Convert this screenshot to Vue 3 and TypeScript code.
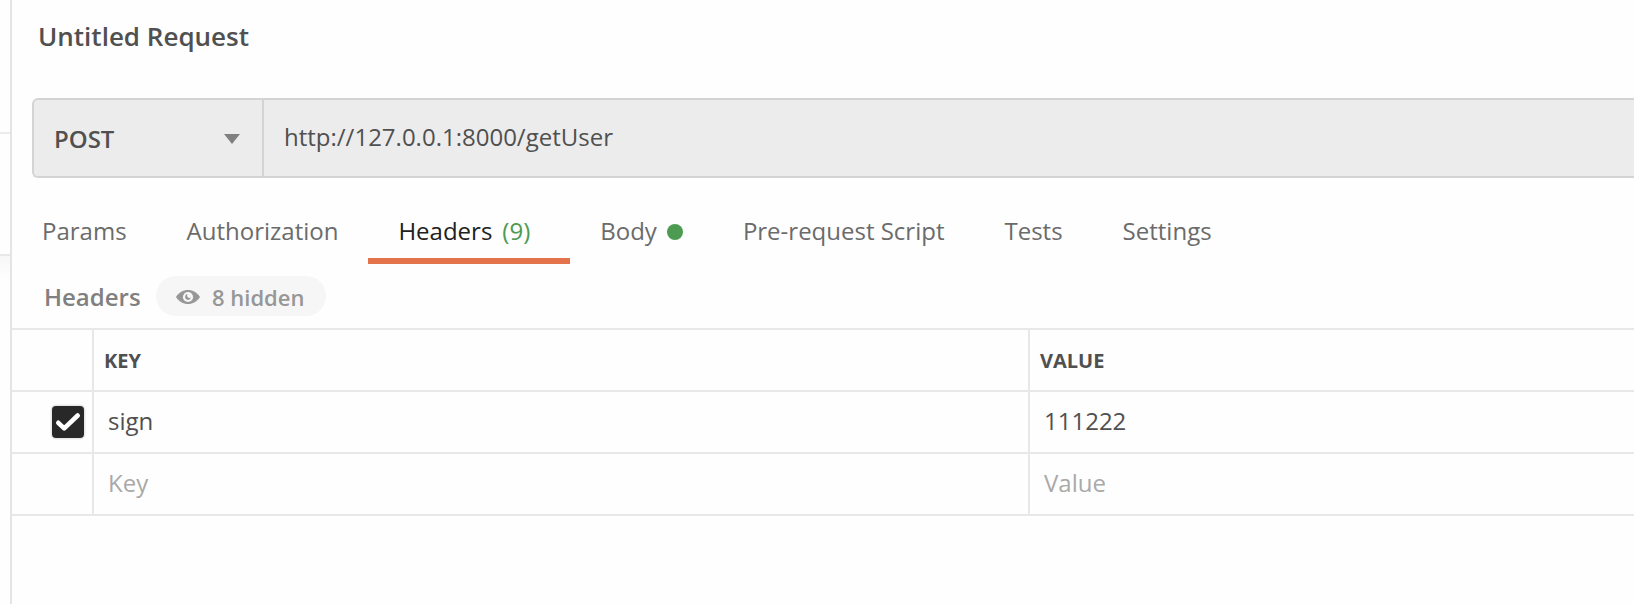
<template>
  <div class="workspace">
    <aside class="sidebar">
      <div class="sidebar-top"></div>
      <div class="sidebar-item"></div>
      <div class="sidebar-rest"></div>
    </aside>

    <main class="request">
      <h1 class="request-name">Untitled Request</h1>

      <div class="url-bar">
        <button class="method" type="button">
          <span>{{ method }}</span>
          <svg class="caret" width="16" height="10" viewBox="0 0 16 10">
            <path d="M0 0h16L8 10z" fill="#808080" />
          </svg>
        </button>
        <div class="url">{{ url }}</div>
      </div>

      <nav class="tabs">
        <div
          v-for="tab in tabs"
          :key="tab.label"
          :class="['tab', { active: tab.label === activeTab }]"
          @click="activeTab = tab.label"
        >
          <span>{{ tab.label }}</span>
          <span v-if="tab.count" class="tab-count">({{ tab.count }})</span>
          <span v-if="tab.dot" class="tab-dot"></span>
        </div>
      </nav>

      <div class="section-bar">
        <span class="section-title">Headers</span>
        <button class="hidden-toggle" type="button">
          <svg width="24" height="14" viewBox="0 0 24 14">
            <path
              fill="#979797"
              fill-rule="evenodd"
              d="M0 7C3 2.300 7.200 0 12 0s9 2.300 12 7c-3 4.700-7.200 7-12 7S3 11.700 0 7zM12 1.900a5.100 5.100 0 1 0 0 10.200 5.100 5.100 0 0 0 0-10.200z"
            />
            <path fill="#979797" d="M11.700 4.100a2.900 2.900 0 1 0 3.200 3.200 1.800 1.800 0 0 1-3.200-3.200z" />
          </svg>
          <span>8 hidden</span>
        </button>
      </div>

      <div class="table">
        <div class="row head">
          <div class="cell check"></div>
          <div class="cell">KEY</div>
          <div class="cell">VALUE</div>
        </div>
        <div v-for="(row, i) in rows" :key="i" class="row">
          <div class="cell check">
            <span v-if="row.enabled" class="checkbox">
              <svg width="32" height="32" viewBox="0 0 32 32">
                <path
                  d="M6.300 16.800l5.900 5.600L25.700 9.500"
                  fill="none"
                  stroke="#fff"
                  stroke-width="4.600"
                  stroke-linecap="round"
                  stroke-linejoin="round"
                />
              </svg>
            </span>
          </div>
          <div :class="['cell', { placeholder: !row.key }]">{{ row.key || 'Key' }}</div>
          <div :class="['cell', { placeholder: !row.value }]">{{ row.value || 'Value' }}</div>
        </div>
      </div>
    </main>
  </div>
</template>

<script setup lang="ts">
import { ref } from 'vue'

interface Tab {
  label: string
  // Number shown in brackets after the label
  count?: number
  // Green marker for tabs that hold data
  dot?: boolean
}

interface HeaderRow {
  key: string
  value: string
  enabled: boolean
}

const method = ref('POST')
const url = ref('http://127.0.0.1:8000/getUser')
const activeTab = ref('Headers')

const tabs: Tab[] = [
  { label: 'Params' },
  { label: 'Authorization' },
  { label: 'Headers', count: 9 },
  { label: 'Body', dot: true },
  { label: 'Pre-request Script' },
  { label: 'Tests' },
  { label: 'Settings' },
]

// The last row is the empty one for new entries
const rows = ref<HeaderRow[]>([
  { key: 'sign', value: '111222', enabled: true },
  { key: '', value: '', enabled: false },
])
</script>

<style>
body {
  margin: 0;
  background: #fff;
}
</style>

<style scoped>
.workspace {
  display: flex;
  height: 604px;
  overflow: hidden;
  background: #fefefe;
  color: #505050;
  font-family: 'Open Sans', sans-serif;
  font-size: 24px;
  line-height: 33px;
}

.workspace * {
  box-sizing: border-box;
}

button {
  padding: 0;
  border: none;
  color: inherit;
  font: inherit;
}

.sidebar {
  display: flex;
  flex-direction: column;
  flex: none;
  width: 12px;
  border-right: 2px solid #e4e4e4;
}

.sidebar-top {
  height: 134px;
  border-bottom: 2px solid #ececec;
}

.sidebar-item {
  height: 122px;
  border-bottom: 2px solid #e8e8e8;
}

.sidebar-rest {
  height: 24px;
  background: linear-gradient(#f7f7f7, #fefefe);
}

.request {
  flex: 1;
  min-width: 0;
}

.request-name {
  margin: 0;
  padding: 18px 0 0 26px;
  height: 98px;
  font-size: 26px;
  font-weight: 600;
  line-height: 36px;
}

.url-bar {
  display: flex;
  height: 80px;
  margin-left: 20px;
  border: 2px solid #d4d4d4;
  border-right: none;
  border-radius: 6px 0 0 6px;
  background: #ececec;
}

.method {
  display: flex;
  align-items: center;
  justify-content: space-between;
  flex: none;
  width: 230px;
  padding: 1px 22px 0 20px;
  border-right: 2px solid #d4d4d4;
  background: none;
  font-weight: 600;
}

.caret {
  margin-top: 1px;
}

.url {
  padding: 20px 20px 0;
}

.tabs {
  display: flex;
  height: 86px;
}

.tab {
  display: flex;
  padding: 36px 30px 0;
  border-bottom: 6px solid transparent;
  color: #6b6b6b;
  white-space: nowrap;
}

.tab.active {
  border-bottom-color: #e2734a;
  color: #212121;
}

.tab-count {
  margin: 0 10px;
  color: #4d9a51;
}

.tab-dot {
  width: 16px;
  height: 16px;
  margin: 10px 0 0 10px;
  border-radius: 50%;
  background: #4d9a51;
}

.section-bar {
  display: flex;
  align-items: center;
  height: 64px;
  padding-left: 32px;
}

.section-title {
  width: 112px;
  padding-top: 1px;
  color: #808080;
  font-weight: 600;
}

.hidden-toggle {
  display: flex;
  align-items: center;
  width: 170px;
  height: 40px;
  padding: 2px 0 0 20px;
  gap: 12px;
  border-radius: 20px;
  background: #f6f6f6;
  color: #979797;
  font-size: 22px;
  font-weight: 600;
}

.table {
  border-top: 2px solid #e8e8e8;
}

.row {
  display: grid;
  grid-template-columns: 82px 936px 1fr;
  height: 62px;
  border-bottom: 2px solid #e8e8e8;
}

.cell {
  padding: 12px 14px 0;
  border-right: 2px solid #e8e8e8;
}

.cell:last-child {
  border-right: none;
}

.head .cell {
  padding: 14px 10px 0;
  font-size: 20px;
  font-weight: 700;
}

.row .check {
  display: flex;
  justify-content: flex-end;
  padding: 14px 8px 0 0;
}

.checkbox {
  width: 32px;
  height: 32px;
  border-radius: 4px;
  background: #282828;
  box-shadow: 0 0 0 1.5px #e8e8ea;
}

.checkbox svg {
  display: block;
}

.placeholder {
  color: #a9a9a9;
}
</style>
